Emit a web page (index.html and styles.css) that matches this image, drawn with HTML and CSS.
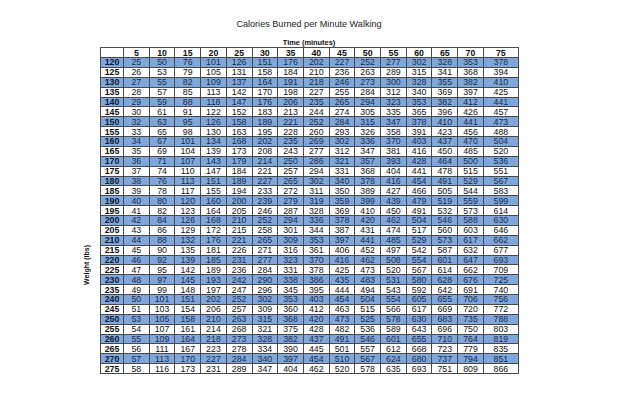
FILE: index.html
```html
<!DOCTYPE html>
<html lang="en">
<head>
<meta charset="utf-8">
<title>Calories Burned per Minute Walking</title>
<link rel="stylesheet" href="styles.css">
</head>
<body>
<div class="chart">
  <h1 class="title">Calories Burned per Minute Walking</h1>
  <div class="axis-top">Time (minutes)</div>
  <div class="body-row">
    <div class="axis-left"><span class="axis-left-text">Weight (lbs)</span></div>
    <table class="grid">
      <colgroup>
        <col class="c-w"><col class="c-n"><col class="c-n"><col class="c-n"><col class="c-n"><col class="c-n"><col class="c-n"><col class="c-n"><col class="c-n"><col class="c-n"><col class="c-n"><col class="c-n"><col class="c-n"><col class="c-n"><col class="c-n"><col class="c-last">
      </colgroup>
      <thead>
        <tr><th></th><th>5</th><th>10</th><th>15</th><th>20</th><th>25</th><th>30</th><th>35</th><th>40</th><th>45</th><th>50</th><th>55</th><th>60</th><th>65</th><th>70</th><th>75</th></tr>
      </thead>
      <tbody>
        <tr><th>120</th><td>25</td><td>50</td><td>76</td><td>101</td><td>126</td><td>151</td><td>176</td><td>202</td><td>227</td><td>252</td><td>277</td><td>302</td><td>328</td><td>353</td><td>378</td></tr>
        <tr><th>125</th><td>26</td><td>53</td><td>79</td><td>105</td><td>131</td><td>158</td><td>184</td><td>210</td><td>236</td><td>263</td><td>289</td><td>315</td><td>341</td><td>368</td><td>394</td></tr>
        <tr><th>130</th><td>27</td><td>55</td><td>82</td><td>109</td><td>137</td><td>164</td><td>191</td><td>218</td><td>246</td><td>273</td><td>300</td><td>328</td><td>355</td><td>382</td><td>410</td></tr>
        <tr><th>135</th><td>28</td><td>57</td><td>85</td><td>113</td><td>142</td><td>170</td><td>198</td><td>227</td><td>255</td><td>284</td><td>312</td><td>340</td><td>369</td><td>397</td><td>425</td></tr>
        <tr><th>140</th><td>29</td><td>59</td><td>88</td><td>118</td><td>147</td><td>176</td><td>206</td><td>235</td><td>265</td><td>294</td><td>323</td><td>353</td><td>382</td><td>412</td><td>441</td></tr>
        <tr><th>145</th><td>30</td><td>61</td><td>91</td><td>122</td><td>152</td><td>183</td><td>213</td><td>244</td><td>274</td><td>305</td><td>335</td><td>365</td><td>396</td><td>426</td><td>457</td></tr>
        <tr><th>150</th><td>32</td><td>63</td><td>95</td><td>126</td><td>158</td><td>189</td><td>221</td><td>252</td><td>284</td><td>315</td><td>347</td><td>378</td><td>410</td><td>441</td><td>473</td></tr>
        <tr><th>155</th><td>33</td><td>65</td><td>98</td><td>130</td><td>163</td><td>195</td><td>228</td><td>260</td><td>293</td><td>326</td><td>358</td><td>391</td><td>423</td><td>456</td><td>488</td></tr>
        <tr><th>160</th><td>34</td><td>67</td><td>101</td><td>134</td><td>168</td><td>202</td><td>235</td><td>269</td><td>302</td><td>336</td><td>370</td><td>403</td><td>437</td><td>470</td><td>504</td></tr>
        <tr><th>165</th><td>35</td><td>69</td><td>104</td><td>139</td><td>173</td><td>208</td><td>243</td><td>277</td><td>312</td><td>347</td><td>381</td><td>416</td><td>450</td><td>485</td><td>520</td></tr>
        <tr><th>170</th><td>36</td><td>71</td><td>107</td><td>143</td><td>179</td><td>214</td><td>250</td><td>286</td><td>321</td><td>357</td><td>393</td><td>428</td><td>464</td><td>500</td><td>536</td></tr>
        <tr><th>175</th><td>37</td><td>74</td><td>110</td><td>147</td><td>184</td><td>221</td><td>257</td><td>294</td><td>331</td><td>368</td><td>404</td><td>441</td><td>478</td><td>515</td><td>551</td></tr>
        <tr><th>180</th><td>38</td><td>76</td><td>113</td><td>151</td><td>189</td><td>227</td><td>265</td><td>302</td><td>340</td><td>378</td><td>416</td><td>454</td><td>491</td><td>529</td><td>567</td></tr>
        <tr><th>185</th><td>39</td><td>78</td><td>117</td><td>155</td><td>194</td><td>233</td><td>272</td><td>311</td><td>350</td><td>389</td><td>427</td><td>466</td><td>505</td><td>544</td><td>583</td></tr>
        <tr><th>190</th><td>40</td><td>80</td><td>120</td><td>160</td><td>200</td><td>239</td><td>279</td><td>319</td><td>359</td><td>399</td><td>439</td><td>479</td><td>519</td><td>559</td><td>599</td></tr>
        <tr><th>195</th><td>41</td><td>82</td><td>123</td><td>164</td><td>205</td><td>246</td><td>287</td><td>328</td><td>369</td><td>410</td><td>450</td><td>491</td><td>532</td><td>573</td><td>614</td></tr>
        <tr><th>200</th><td>42</td><td>84</td><td>126</td><td>168</td><td>210</td><td>252</td><td>294</td><td>336</td><td>378</td><td>420</td><td>462</td><td>504</td><td>546</td><td>588</td><td>630</td></tr>
        <tr><th>205</th><td>43</td><td>86</td><td>129</td><td>172</td><td>215</td><td>258</td><td>301</td><td>344</td><td>387</td><td>431</td><td>474</td><td>517</td><td>560</td><td>603</td><td>646</td></tr>
        <tr><th>210</th><td>44</td><td>88</td><td>132</td><td>176</td><td>221</td><td>265</td><td>309</td><td>353</td><td>397</td><td>441</td><td>485</td><td>529</td><td>573</td><td>617</td><td>662</td></tr>
        <tr><th>215</th><td>45</td><td>90</td><td>135</td><td>181</td><td>226</td><td>271</td><td>316</td><td>361</td><td>406</td><td>452</td><td>497</td><td>542</td><td>587</td><td>632</td><td>677</td></tr>
        <tr><th>220</th><td>46</td><td>92</td><td>139</td><td>185</td><td>231</td><td>277</td><td>323</td><td>370</td><td>416</td><td>462</td><td>508</td><td>554</td><td>601</td><td>647</td><td>693</td></tr>
        <tr><th>225</th><td>47</td><td>95</td><td>142</td><td>189</td><td>236</td><td>284</td><td>331</td><td>378</td><td>425</td><td>473</td><td>520</td><td>567</td><td>614</td><td>662</td><td>709</td></tr>
        <tr><th>230</th><td>48</td><td>97</td><td>145</td><td>193</td><td>242</td><td>290</td><td>338</td><td>386</td><td>435</td><td>483</td><td>531</td><td>580</td><td>628</td><td>676</td><td>725</td></tr>
        <tr><th>235</th><td>49</td><td>99</td><td>148</td><td>197</td><td>247</td><td>296</td><td>345</td><td>395</td><td>444</td><td>494</td><td>543</td><td>592</td><td>642</td><td>691</td><td>740</td></tr>
        <tr><th>240</th><td>50</td><td>101</td><td>151</td><td>202</td><td>252</td><td>302</td><td>353</td><td>403</td><td>454</td><td>504</td><td>554</td><td>605</td><td>655</td><td>706</td><td>756</td></tr>
        <tr><th>245</th><td>51</td><td>103</td><td>154</td><td>206</td><td>257</td><td>309</td><td>360</td><td>412</td><td>463</td><td>515</td><td>566</td><td>617</td><td>669</td><td>720</td><td>772</td></tr>
        <tr><th>250</th><td>53</td><td>105</td><td>158</td><td>210</td><td>263</td><td>315</td><td>368</td><td>420</td><td>473</td><td>525</td><td>578</td><td>630</td><td>683</td><td>735</td><td>788</td></tr>
        <tr><th>255</th><td>54</td><td>107</td><td>161</td><td>214</td><td>268</td><td>321</td><td>375</td><td>428</td><td>482</td><td>536</td><td>589</td><td>643</td><td>696</td><td>750</td><td>803</td></tr>
        <tr><th>260</th><td>55</td><td>109</td><td>164</td><td>218</td><td>273</td><td>328</td><td>382</td><td>437</td><td>491</td><td>546</td><td>601</td><td>655</td><td>710</td><td>764</td><td>819</td></tr>
        <tr><th>265</th><td>56</td><td>111</td><td>167</td><td>223</td><td>278</td><td>334</td><td>390</td><td>445</td><td>501</td><td>557</td><td>612</td><td>668</td><td>723</td><td>779</td><td>835</td></tr>
        <tr><th>270</th><td>57</td><td>113</td><td>170</td><td>227</td><td>284</td><td>340</td><td>397</td><td>454</td><td>510</td><td>567</td><td>624</td><td>680</td><td>737</td><td>794</td><td>851</td></tr>
        <tr><th>275</th><td>58</td><td>116</td><td>173</td><td>231</td><td>289</td><td>347</td><td>404</td><td>462</td><td>520</td><td>578</td><td>635</td><td>693</td><td>751</td><td>809</td><td>866</td></tr>
      </tbody>
    </table>
  </div>
</div>
</body>
</html>
```

FILE: styles.css
```css
html, body {
  margin: 0;
  padding: 0;
  background: #ffffff;
}

body {
  font-family: "Liberation Sans", Arial, Helvetica, sans-serif;
  color: #111111;
}

.chart {
  width: 618px;
  padding-top: 18px;
}

.title {
  margin: 0;
  font-size: 9.1px;
  font-weight: normal;
  line-height: 12px;
  text-align: center;
  color: #1a1a1a;
}

.axis-top {
  margin: 9px 0 0 100px;
  width: 418px;
  font-size: 7.4px;
  font-weight: bold;
  line-height: 8px;
  text-align: center;
}

.body-row {
  display: flex;
  align-items: flex-start;
  padding-left: 83px;
}

.axis-left {
  width: 8px;
  margin-right: 9px;
  padding-top: 198px;
  display: flex;
  justify-content: center;
}

.axis-left-text {
  writing-mode: vertical-rl;
  transform: rotate(180deg);
  font-size: 7px;
  font-weight: bold;
  line-height: 8px;
  white-space: nowrap;
}

.grid {
  width: 418px;
  table-layout: fixed;
  border-collapse: collapse;
  border: 1px solid #222222;
  font-size: 8.8px;
  line-height: 8px;
}

.c-w { width: 23px; }
.c-n { width: 25.714px; }
.c-last { width: 35px; }

.grid th,
.grid td {
  padding: 0;
  border: 1px solid #4a4a4a;
  text-align: center;
  vertical-align: middle;
  white-space: nowrap;
}

.grid th {
  font-weight: bold;
  color: #111111;
}

.grid thead tr {
  height: 10px;
}

.grid tbody tr {
  height: 9.88px;
}

.grid tbody tr:nth-child(odd) {
  background: #80a7dc;
}

.grid tbody tr:nth-child(odd) td {
  color: #1b2a48;
}

.grid tbody tr:nth-child(odd) th {
  color: #0d1830;
}
```
